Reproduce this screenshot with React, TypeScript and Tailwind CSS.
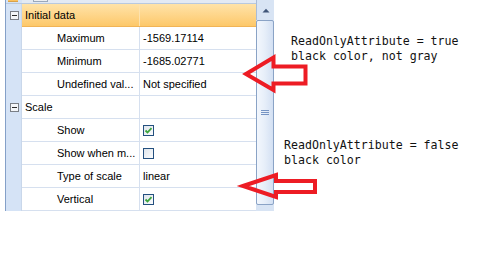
import React from "react";

type Row =
  | { kind: "cat"; label: string; selected?: boolean }
  | { kind: "prop"; label: string; value?: string; check?: boolean };

const rows: Row[] = [
  { kind: "cat", label: "Initial data", selected: true },
  { kind: "prop", label: "Maximum", value: "-1569.17114" },
  { kind: "prop", label: "Minimum", value: "-1685.02771" },
  { kind: "prop", label: "Undefined val...", value: "Not specified" },
  { kind: "cat", label: "Scale" },
  { kind: "prop", label: "Show", check: true },
  { kind: "prop", label: "Show when m...", check: false },
  { kind: "prop", label: "Type of scale", value: "linear" },
  { kind: "prop", label: "Vertical", check: true },
];

function MinusBox() {
  return (
    <div className="w-[9px] h-[9px] border border-[#7a7f87] bg-[#f4f6f9] flex items-center justify-center">
      <div className="w-[5px] h-[1px] bg-[#2b2b2b]" />
    </div>
  );
}

function CheckBox({ checked }: { checked: boolean }) {
  return (
    <div className="w-[11px] h-[11px] border border-[#24507f] bg-gradient-to-br from-[#dfe5ec] to-[#fbfcfd] flex items-center justify-center">
      {checked && (
        <svg width="9" height="9" viewBox="0 0 9 9">
          <path d="M1.5 4.5 L3.5 6.5 L7.5 2.2" stroke="#3da53d" strokeWidth="1.8" fill="none" />
        </svg>
      )}
    </div>
  );
}

function GridRow({ row }: { row: Row }) {
  const isCat = row.kind === "cat";
  const selected = row.kind === "cat" && row.selected;
  return (
    <div className="flex h-[23px]">
      <div className="w-[16px] bg-[#d5e3f6] border-r border-[#c9d7ea] flex items-center pl-[4px]">
        {isCat && <MinusBox />}
      </div>
      <div
        className={
          selected
            ? "flex-1 flex border-b border-[#f1b456] bg-gradient-to-b from-[#ffe3a8] to-[#fdc869]"
            : "flex-1 flex border-b border-[#d6e0ef] bg-white"
        }
      >
        <div
          className={
            "w-[118px] flex items-center border-r " +
            (selected ? "border-[#fde2ae] " : "border-[#d6e0ef] ") +
            (isCat ? "pl-[3px]" : "pl-[35px]")
          }
        >
          <span className="whitespace-nowrap">{row.label}</span>
        </div>
        <div className="flex-1 flex items-center pl-[3px]">
          {row.kind === "prop" && row.value !== undefined && (
            <span className="whitespace-nowrap">{row.value}</span>
          )}
          {row.kind === "prop" && row.check !== undefined && <CheckBox checked={row.check} />}
        </div>
      </div>
    </div>
  );
}

function ScrollBar() {
  return (
    <div className="w-[18px] h-[211px] bg-[#d8e4f4] flex flex-col">
      <div className="h-[20px] flex items-center justify-center border-l border-[#a9bcd7]">
        <svg width="8" height="5" viewBox="0 0 8 5">
          <path d="M0.5 4.5 L4 0.8 L7.5 4.5 Z" fill="#3f5579" />
        </svg>
      </div>
      <div className="h-[185px] rounded-[2px] border border-[#8aa3c6] bg-gradient-to-r from-[#f3f7fd] via-[#e6eef9] to-[#d3e0f3] flex flex-col items-center justify-center gap-[1px]">
        <div className="w-[8px] h-[1px] bg-[#7694c4]" />
        <div className="w-[8px] h-[1px] bg-[#7694c4]" />
        <div className="w-[8px] h-[1px] bg-[#7694c4]" />
      </div>
      <div className="flex-1" />
    </div>
  );
}

export default function App() {
  return (
    <div
      className="w-[500px] h-[257px] bg-white relative flex text-[11px] text-black overflow-hidden"
      style={{ fontFamily: '"Liberation Sans", Arial, sans-serif' }}
    >
      <div className="ml-[5px] flex h-[211px]">
        <div className="w-[251px] border-l border-[#84a0c8] flex flex-col">
          <div className="h-[4px] flex bg-[#e3eaf4] border-b border-[#b9c9de]">
            <div className="w-[16px] bg-[#d5e3f6] flex">
              <div className="ml-[2px] w-[10px] h-[2px] bg-[#fbc25f] border-b border-[#d9a24a]" />
            </div>
            <div className="ml-[11px] w-[15px] h-[2px] bg-[#eceff3] border border-t-0 border-[#9aa8ba]" />
          </div>
          {rows.map((r, i) => (
            <GridRow key={i} row={r} />
          ))}
        </div>
        <ScrollBar />
      </div>
      <div
        className="flex-1 flex flex-col text-[11.6px] leading-[15px] text-[#111]"
        style={{ fontFamily: '"DejaVu Sans Mono", "Liberation Mono", monospace' }}
      >
        <div className="mt-[34px] ml-[17px] whitespace-pre">
          <div>ReadOnlyAttribute = true</div>
          <div>black color, not gray</div>
        </div>
        <div className="mt-[74px] ml-[10px] whitespace-pre">
          <div>ReadOnlyAttribute = false</div>
          <div>black color</div>
        </div>
      </div>
      <svg
        className="absolute inset-0 pointer-events-none"
        width="500"
        height="257"
        viewBox="0 0 500 257"
      >
        <polygon
          points="246,74 273.5,57.5 273.5,66.5 305.5,66.5 305.5,83.5 273.5,83.5 273.5,90"
          fill="none"
          stroke="#ed1c24"
          strokeWidth="4"
          strokeLinejoin="miter"
        />
        <polygon
          points="243,186 276,175 276,181 315,181 315,192 276,192 276,197"
          fill="none"
          stroke="#ed1c24"
          strokeWidth="4"
          strokeLinejoin="miter"
        />
      </svg>
    </div>
  );
}
